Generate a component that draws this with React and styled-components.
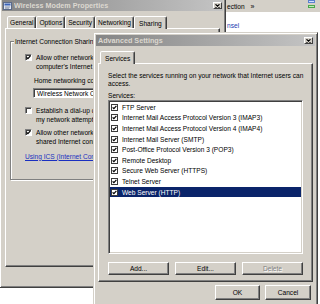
import React from "react";
import styled, { createGlobalStyle } from "styled-components";

const FACE = "#d4d0c8";
const SHADOW = "#808080";
const DARK = "#404040";
const FONT = `"Liberation Sans", Arial, sans-serif`;

const GlobalStyle = createGlobalStyle`
  * { box-sizing: border-box; }
  html, body { margin: 0; padding: 0; background: #ffffff; }
  body { overflow: hidden; font-family: ${FONT}; }
`;

const Desktop = styled.div`
  position: relative;
  width: 320px;
  height: 304px;
  overflow: hidden;
  background: #ffffff;
  font-family: ${FONT};
  font-size: 6.6px;
  color: #000;
`;

/* ---------- background explorer window ---------- */
const BackWindow = styled.div`
  position: absolute;
  left: 200px;
  top: 0;
  width: 120px;
  height: 44px;
  background: #fff;
  display: flex;
  flex-direction: column;
`;
const BackToolbar = styled.div`
  height: 12px;
  flex: none;
  background: ${FACE};
  display: flex;
  align-items: center;
  gap: 6px;
  padding: 0 4px 0 27px;
  white-space: nowrap;
`;
const Chevron = styled.span`
  font-size: 7px;
`;
const ToolIcons = styled.svg`
  margin-left: auto;
  align-self: flex-start;
  flex: none;
`;
const BackContent = styled.div`
  display: flex;
  flex-direction: column;
  padding: 9px 0 0 27px;
  line-height: 9px;
  white-space: nowrap;
`;
const BackLink = styled.span`
  color: ${(p) => (p.$muted ? "#333" : "#2040b0")};
`;

/* ---------- classic window ---------- */
const Window = styled.div`
  position: absolute;
  left: ${(p) => p.$left}px;
  top: ${(p) => p.$top}px;
  width: ${(p) => p.$width}px;
  ${(p) => (p.$height ? `height: ${p.$height}px;` : "")}
  background: ${FACE};
  border: 1px solid;
  border-color: ${FACE} ${DARK} ${DARK} ${FACE};
  box-shadow: inset 1px 1px #fff, inset -1px -1px ${SHADOW};
  padding: 2px;
  display: flex;
  flex-direction: column;
`;

const TitleBar = styled.div`
  height: 11px;
  flex: none;
  display: flex;
  align-items: center;
  gap: 2px;
  padding: 0 ${(p) => p.$padRight}px 0 ${(p) => p.$padLeft}px;
  background: linear-gradient(to right, #858585, #c4c4c4);
  color: #dcd8d0;
  font-weight: bold;
  font-size: 7.2px;
  white-space: nowrap;
`;
const TitleText = styled.span`
  flex: 1;
  overflow: hidden;
`;
const CloseButton = styled.div`
  width: 9px;
  height: 7px;
  flex: none;
  background: ${FACE};
  border: 1px solid;
  border-color: #fff ${DARK} ${DARK} #fff;
  display: flex;
  align-items: center;
  justify-content: center;
`;

const Body = styled.div`
  flex: ${(p) => (p.$fill ? 1 : "none")};
  display: flex;
  flex-direction: column;
  min-height: 0;
  padding: ${(p) => p.$pad};
`;

const TabRow = styled.div`
  display: flex;
  align-items: flex-end;
  padding-left: 2px;
  position: relative;
  z-index: 1;
  flex: none;
`;
const Tab = styled.div`
  height: ${(p) => (p.$active ? 13 : 12)}px;
  margin-bottom: ${(p) => (p.$active ? -1 : 0)}px;
  padding: 0 ${(p) => (p.$active ? 4 : 2)}px;
  background: ${FACE};
  border: 1px solid;
  border-bottom: none;
  border-color: #fff ${DARK} transparent #fff;
  border-radius: 2px 2px 0 0;
  box-shadow: inset -1px 0 ${SHADOW};
  display: flex;
  align-items: center;
  justify-content: center;
  white-space: nowrap;
`;

const TabPanel = styled.div`
  flex: ${(p) => (p.$fill ? 1 : "none")};
  display: flex;
  flex-direction: column;
  background: ${FACE};
  border: 1px solid;
  border-color: #fff ${DARK} ${DARK} #fff;
  box-shadow: inset -1px -1px ${SHADOW};
  padding: ${(p) => p.$pad};
`;

/* ---------- group box and options ---------- */
const GroupBox = styled.div`
  position: relative;
  margin-top: 12px;
  border: 1px solid ${SHADOW};
  box-shadow: inset 1px 1px #fff, 1px 1px #fff;
  padding: 10.5px 0 18.5px 14px;
  display: flex;
  flex-direction: column;
  align-items: flex-start;
`;
const GroupLabel = styled.span`
  position: absolute;
  top: -4.5px;
  left: 3px;
  padding: 0 1px;
  background: ${FACE};
  line-height: 8px;
  white-space: nowrap;
`;
const OptionRow = styled.div`
  display: flex;
  align-items: flex-start;
  gap: 4px;
  margin-top: ${(p) => p.$space}px;
`;
const OptionText = styled.span`
  line-height: 9px;
  white-space: nowrap;
`;
const Box = styled.span`
  width: 7px;
  height: 7px;
  flex: none;
  background: #fff;
  margin-top: ${(p) => (p.$flat ? 0 : 1.5)}px;
  border: 1px solid;
  border-color: ${(p) =>
    p.$flat ? "#3a3a3a" : `${SHADOW} #fff #fff ${SHADOW}`};
  box-shadow: ${(p) => (p.$flat ? "none" : `inset 1px 1px ${DARK}`)};
  display: flex;
  align-items: center;
  justify-content: center;
`;
const FieldCaption = styled.span`
  margin: 5px 0 0 9px;
  line-height: 9px;
  white-space: nowrap;
`;
const Combo = styled.div`
  margin: 3.5px 0 0 8px;
  width: 170px;
  height: 10px;
  background: #fff;
  border: 1px solid;
  border-color: ${SHADOW} #fff #fff ${SHADOW};
  box-shadow: inset 1px 1px ${DARK};
  display: flex;
  align-items: center;
  padding-left: 3px;
  white-space: nowrap;
`;
const HelpLink = styled.span`
  margin-top: 6px;
  line-height: 9px;
  color: #1a2fc0;
  text-decoration: underline;
  white-space: nowrap;
`;

/* ---------- advanced settings ---------- */
const Description = styled.div`
  line-height: 8px;
  white-space: nowrap;
`;
const Caption = styled.div`
  margin-top: 4px;
  line-height: 8px;
`;
const ListBox = styled.div`
  height: 154px;
  background: #fff;
  border: 1px solid;
  border-color: ${SHADOW} #fff #fff ${SHADOW};
  box-shadow: inset 1px 1px ${DARK}, inset -1px -1px ${FACE};
  padding: 1px;
  display: flex;
  flex-direction: column;
`;
const ListRow = styled.div`
  height: 10.6px;
  flex: none;
  display: flex;
  align-items: center;
  gap: 4px;
  padding-left: 1px;
  white-space: nowrap;
  background: ${(p) => (p.$selected ? "#0a246a" : "transparent")};
  color: ${(p) => (p.$selected ? "#fff" : "#000")};
`;
const ButtonGrid = styled.div`
  display: grid;
  grid-template-columns: repeat(3, 1fr);
  column-gap: 6px;
  margin-top: 8px;
`;
const Footer = styled.div`
  display: flex;
  justify-content: flex-end;
  gap: 5px;
  margin-top: 3px;
  padding-right: 2px;
  flex: none;
`;
const Button = styled.button`
  height: ${(p) => (p.$big ? 15 : 13)}px;
  width: ${(p) => (p.$w ? `${p.$w}px` : "auto")};
  padding: 0;
  font-family: ${FONT};
  font-size: 6.6px;
  background: ${FACE};
  color: ${(p) => (p.disabled ? SHADOW : "#000")};
  text-shadow: ${(p) => (p.disabled ? "1px 1px #fff" : "none")};
  border: 1px solid;
  border-color: #fff ${DARK} ${DARK} #fff;
  box-shadow: inset -1px -1px ${SHADOW};
`;

const CheckMark = () => (
  <svg width="5" height="5" viewBox="0 0 5 5">
    <path d="M0.6 2.3 L1.9 3.7 L4.4 0.9" fill="none" stroke="#000" strokeWidth="1.2" />
  </svg>
);

const CloseGlyph = () => (
  <svg width="5" height="4" viewBox="0 0 5 4">
    <path d="M0.5 0.3 L4.5 3.7 M4.5 0.3 L0.5 3.7" stroke="#000" strokeWidth="1.1" />
  </svg>
);

const services = [
  "FTP Server",
  "Internet Mail Access Protocol Version 3 (IMAP3)",
  "Internet Mail Access Protocol Version 4 (IMAP4)",
  "Internet Mail Server (SMTP)",
  "Post-Office Protocol Version 3 (POP3)",
  "Remote Desktop",
  "Secure Web Server (HTTPS)",
  "Telnet Server",
  "Web Server (HTTP)",
];

export default function App() {
  return (
    <Desktop>
      <GlobalStyle />

      <BackWindow>
        <BackToolbar>
          <span>ection</span>
          <Chevron>»</Chevron>
          <ToolIcons width="9" height="9" viewBox="0 0 9 9">
            <rect x="1" y="0" width="7" height="3" fill="#5a7fd0" />
            <rect x="2" y="1" width="5" height="1" fill="#cfe0ff" />
            <rect x="1" y="5" width="7" height="3" fill="#4aa84a" />
            <rect x="2" y="6" width="5" height="1" fill="#bfe8bf" />
          </ToolIcons>
        </BackToolbar>
        <BackContent>
          <BackLink>nsel</BackLink>
          <BackLink $muted>ti   lk</BackLink>
        </BackContent>
      </BackWindow>

      <Window $left={-1} $top={-3} $width={227} $height={291}>
        <TitleBar $padLeft={1} $padRight={1}>
          <svg width="9" height="8" viewBox="0 0 9 8">
            <rect x="0.5" y="0.5" width="8" height="7" fill="#dfe6f2" stroke="#5a6a8a" />
            <rect x="1.5" y="1.5" width="6" height="2" fill="#3d64b8" />
            <path d="M2 5 H7 M2 6.2 H6" stroke="#7a869c" strokeWidth="0.8" />
          </svg>
          <TitleText>Wireless Modem Properties</TitleText>
          <CloseButton>
            <CloseGlyph />
          </CloseButton>
        </TitleBar>
        <Body $fill $pad="5px 3px 0 3px">
          <TabRow>
            <Tab>General</Tab>
            <Tab>Options</Tab>
            <Tab>Security</Tab>
            <Tab>Networking</Tab>
            <Tab $active>Sharing</Tab>
          </TabRow>
          <TabPanel $fill $pad="0 4px">
            <GroupBox>
              <GroupLabel>Internet Connection Sharing</GroupLabel>
              <OptionRow $space={0}>
                <Box>
                  <CheckMark />
                </Box>
                <OptionText>
                  Allow other network users to connect through this
                  <br />
                  computer's Internet connection
                </OptionText>
              </OptionRow>
              <FieldCaption>Home networking connection:</FieldCaption>
              <Combo>Wireless Network Connection</Combo>
              <OptionRow $space={7.5}>
                <Box />
                <OptionText>
                  Establish a dial-up connection whenever a computer on
                  <br />
                  my network attempts to access the Internet
                </OptionText>
              </OptionRow>
              <OptionRow $space={4}>
                <Box>
                  <CheckMark />
                </Box>
                <OptionText>
                  Allow other network users to control or disable the
                  <br />
                  shared Internet connection
                </OptionText>
              </OptionRow>
              <HelpLink>Using ICS (Internet Connection Sharing)</HelpLink>
            </GroupBox>
          </TabPanel>
          <Footer>
            <Button $big $w={45}>OK</Button>
            <Button $big $w={46}>Cancel</Button>
          </Footer>
        </Body>
      </Window>

      <Window $left={93} $top={32} $width={225}>
        <TitleBar $padLeft={2} $padRight={2}>
          <TitleText>Advanced Settings</TitleText>
          <CloseButton>
            <CloseGlyph />
          </CloseButton>
        </TitleBar>
        <Body $pad="5px 2px 6px 2px">
          <TabRow>
            <Tab $active>Services</Tab>
          </TabRow>
          <TabPanel $pad="8px 9px 6px 9px">
            <Description>
              Select the services running on your network that Internet users can
              <br />
              access.
            </Description>
            <Caption>Services:</Caption>
            <ListBox>
              {services.map((s, i) => (
                <ListRow key={s} $selected={i === services.length - 1}>
                  <Box $flat>
                    <CheckMark />
                  </Box>
                  <span>{s}</span>
                </ListRow>
              ))}
            </ListBox>
            <ButtonGrid>
              <Button>Add...</Button>
              <Button>Edit...</Button>
              <Button disabled>Delete</Button>
            </ButtonGrid>
          </TabPanel>
          <Footer>
            <Button $big $w={45}>OK</Button>
            <Button $big $w={46}>Cancel</Button>
          </Footer>
        </Body>
      </Window>
    </Desktop>
  );
}
